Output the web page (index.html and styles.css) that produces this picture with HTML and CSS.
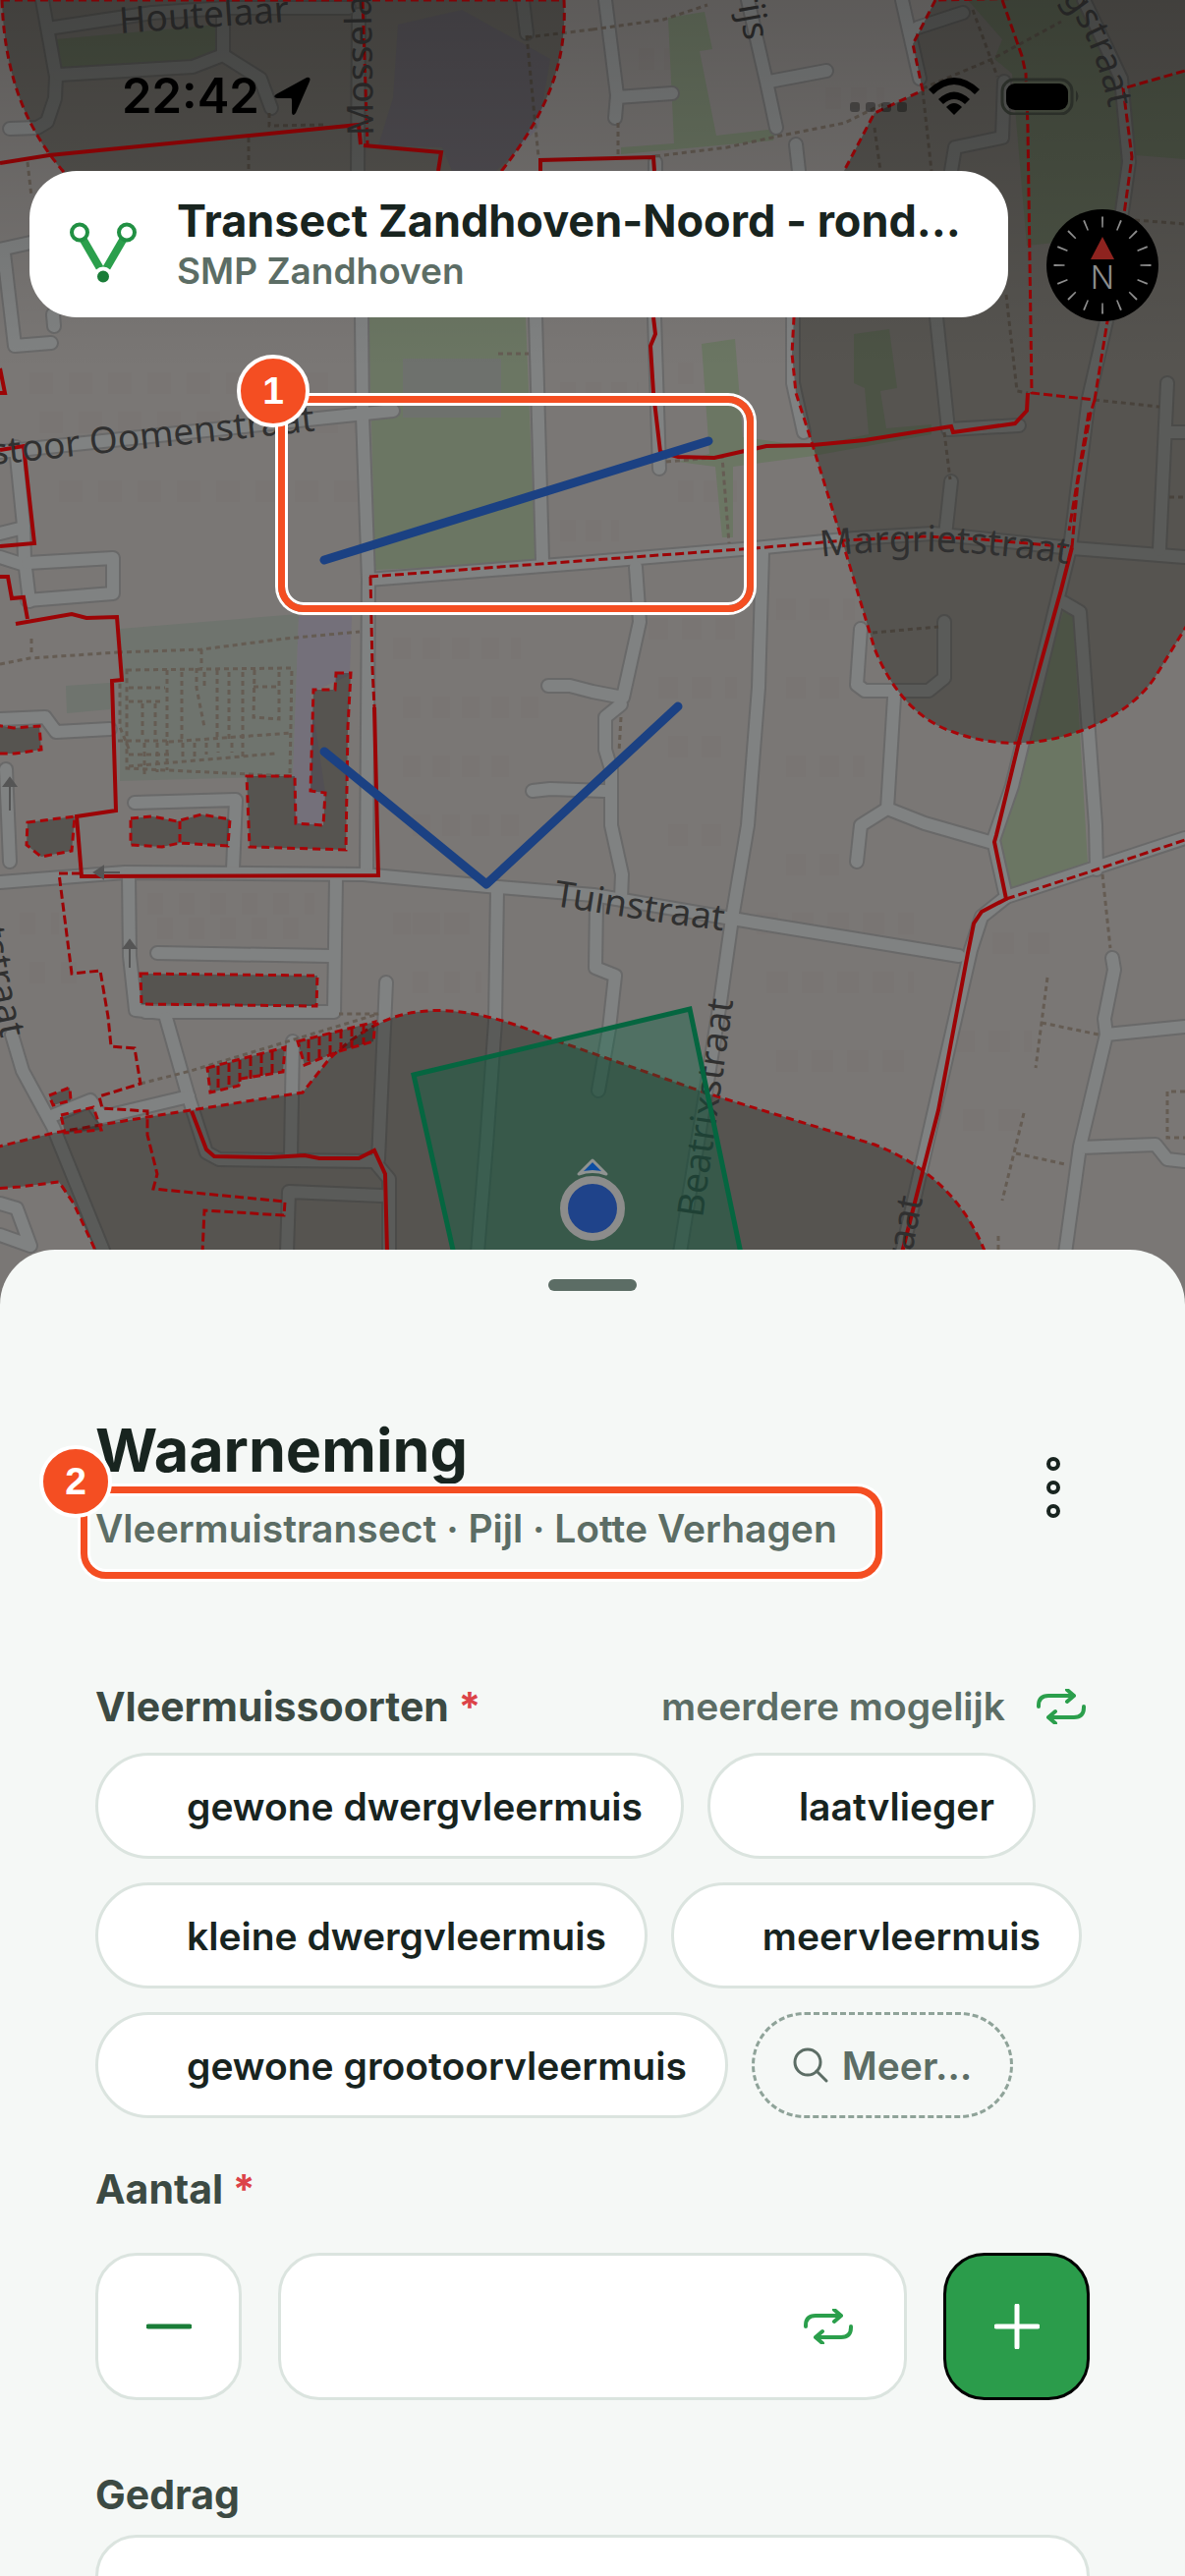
FILE: index.html
```html
<!DOCTYPE html>
<html lang="nl">
<head>
  <meta charset="UTF-8">
  <title>Waarneming | SMP Zandhoven</title>
  <meta name="viewport" content="width=device-width, initial-scale=1.0">
  <link rel="stylesheet" href="styles.css">
</head>
<body>
  <div class="app">
    <section class="map">
      <svg class="map-canvas" viewBox="0 0 1206 1340" aria-hidden="true">
        <defs>
          <linearGradient id="shade" x1="0" y1="0" x2="0" y2="1">
            <stop offset="0" stop-color="#000" stop-opacity="0.24"/>
            <stop offset="0.12" stop-color="#000" stop-opacity="0.14"/>
            <stop offset="0.28" stop-color="#000" stop-opacity="0"/>
          </linearGradient>
          <path id="margriet" d="M836 567 Q950 552 1100 576"/>
          <path id="tuin" d="M563 922 L680 940 L780 953"/>
          <path id="ring" d="M1080 -2 Q1124 50 1136 160"/>
          <g id="streets">
            <path d="M43 0L57 78L56 100L48 124L38 130L10 131"/>
            <path d="M55 28L155 13L230 8L355 8M60 76L196 68L227 56V16M230 58L265 80L276 110"/>
            <path d="M365 15L364 174L368 323L369 423L375 590L373 890"/>
            <path d="M532 0L536 34M0 254L40 245M4 258L15 352L52 349M54 320L55 332"/>
            <path d="M545 323L552 570M0 460L400 418M16 455L24 535L25 570L30 612M0 543L24 537M0 567L25 575"/>
            <path d="M28 573L115 568V604L28 611"/>
            <path d="M0 732L46 730L57 745L112 742M137 817L240 814L237 885"/>
            <path d="M0 898L127 888L370 890L496 902L604 911L745 935L976 973"/>
            <path d="M6 783L10 877M131 890L132 973L138 1028L165 1031M148 1030H340L342 895M160 970L335 973"/>
            <path d="M169 1036L192 1117L210 1173L223 1180L381 1182L396 1200V1275"/>
            <path d="M298 1060L296 1175M393 1000L385 1180M506 905L504 1040L495 1165L486 1275M292 1275L294 1213L388 1217"/>
            <path d="M12 1053L23 1090L54 1147L112 1290M50 1137L92 1120L104 1137L192 1116M0 1257L31 1268L17 1230L0 1225"/>
            <path d="M616 0L628 97L626 120M628 99L684 95M761 0L780 83L790 130M783 83L841 72"/>
            <path d="M918 0L936 80M934 28L980 13M810 147L813 174M667 165L666 323L671 477M807 323V390L818 440"/>
            <path d="M1103 0L1141 80L1149 165L1142 215L1126 327L1108 405L1089 558L1030 800L1011 855L1024 913L999 933L988 967L918 1275"/>
            <path d="M1024 913L1206 853M1022 83L1020 140L972 150L968 174M953 323L965 437L1037 433M968 490L962 545"/>
            <path d="M375 590L603 572L768 558L870 548L949 543L1091 558L1206 567"/>
            <path d="M647 577L651 633L634 710L603 704L580 698H558M632 717L616 730V763L622 783V840L633 890L632 915M542 805L560 803L615 805"/>
            <path d="M776 563L772 700L761 840L745 935L733 1020L692 1275"/>
            <path d="M876 640L872 697L880 703H945L961 690V633M910 710L903 823L876 840L872 877M903 823L941 838L1007 857"/>
            <path d="M1082 613L1099 623L1115 840L1116 885M1188 390L1180 560M1188 440H1206"/>
            <path d="M1132 975L1134 987L1124 1037L1126 1053L1099 1167L1082 1290M1126 1053L1206 1045M1100 1168L1176 1165L1188 1180L1206 1182"/>
            <path d="M607 920L606 985L626 993L620 1047L609 1110"/>
          </g>
        </defs>

        <rect width="1206" height="1340" fill="#7a7775"/>

        <!-- faint parcels -->
        <g class="parcels">
          <path d="M30 390h320M40 430h330M60 500h320" stroke-dasharray="24 16"/>
          <path d="M400 660h130M410 720h140M410 780h120M420 840h110M400 940h90" stroke-dasharray="18 12"/>
          <path d="M660 640h90M670 700h80M680 760h60M680 850h60M790 620h80M800 700h60M800 780h80M800 880h60" stroke-dasharray="20 14"/>
          <path d="M770 940h160M780 1000h150M790 1080h130M970 1060h80M980 1140h70M1010 960h60" stroke-dasharray="22 14"/>
          <path d="M150 920h170M160 945h150M420 940h60M420 1000h70M20 940h40M30 990h60" stroke-dasharray="16 16"/>
          <path d="M570 400h80M690 380h60M690 500h60M570 540h60M840 100h60M650 60h40" stroke-dasharray="16 10"/>
        </g>

        <g class="parks">
          <path d="M57 40L222 25V55L195 64L63 70Z"/>
          <path d="M375 323H535L545 573L382 580Z"/>
          <path d="M680 18L717 12L725 50L712 52L729 138L790 131L787 143L632 157V150L686 146Z"/>
          <path d="M714 350L748 345L756 445L827 455L828 464L746 475V547H735L728 475L690 470L722 462Z"/>
          <path d="M985 0H1100L1138 80L1145 160L1140 240L1045 250L1030 75L1012 60L1020 40Z"/>
          <path d="M1148 90L1206 72V162L1155 158Z"/>
          <path d="M869 340L905 335L913 395L896 398L902 436L948 432V442L828 464L827 454L884 442L880 395L869 390Z"/>
          <path d="M1083 620L1092 628L1107 879L1030 908L1018 855L1040 760Z"/>
        </g>
        <path d="M410 365H510V425H410Z" fill="#6e716d"/>
        <path d="M122 640L304 625L298 790L122 795ZM67 698L112 695V722L68 726Z" fill="#6f746e"/>
        <path d="M304 627H358L356 687L316 705L331 807L328 840H300L298 790ZM405 25L470 10L560 60L548 130L505 174H460L450 150L385 148L400 100Z" fill="#74707a"/>

        <use href="#streets" class="street-edge"/>
        <use href="#streets" class="street-fill"/>

        <!-- foot paths -->
        <g class="footpaths">
          <path d="M120 664L205 661L290 650L366 643M205 661V680M0 676L30 670L120 664M32 650V668"/>
          <path d="M129 682L297 680L295 790L129 782Z"/>
          <path d="M131 700H168M131 714H165M170 682V784M185 684V755M200 680V700L208 740M208 684V702M221 682V750M233 684V755M247 684V770M259 682L258 730L284 732V682M258 699H284M131 762L122 740V695"/>
          <path d="M172 755L297 746M120 754H170M145 716V750M158 716V750M147 756V790M160 756V786M186 756V770M198 756V770M210 756V768M222 756V766M236 756V766M131 768H175M131 780L280 767"/>
          <path d="M603 30L675 20L720 5M629 125V158M667 159L740 150L790 139L860 125L900 105M939 90L1010 60L1080 22M890 130L896 174M939 92L948 174M990 10L1015 78"/>
          <path d="M536 36L548 160M536 38L603 30M274 115V128L330 127M253 140V174M28 165L32 200M507 360H538"/>
          <path d="M1024 300L1035 398L1046 400M1114 407L1180 414M961 440L967 488M888 644L955 638M678 470L735 465L742 553M1155 224L1206 228M1190 506H1206"/>
          <path d="M1122 890L1130 965M1066 995L1054 1087M1060 1041L1118 1053M1042 1133L1020 1222M1034 1174L1084 1185M1016 1258V1275M1206 1111H1188V1158H1206M632 730L630 765"/>
          <path d="M143 1103L194 1090L385 1032H345"/>
        </g>

        <!-- protected zones -->
        <g class="zones">
          <path d="M2 0C5 90 35 140 64 174C160 300 410 300 512 172C560 110 577 60 574 0Z"/>
          <path d="M952 0L929 45L939 92L890 115L859 174L830 240L808 323L806 360L810 400L827 453L860 560L890 660C910 710 940 735 970 745Q1037 770 1110 740Q1155 720 1175 690L1212 630V-5Z"/>
          <path d="M-5 1168L55 1153L150 1137L308 1112L335 1078Q380 1035 425 1030Q480 1022 560 1057L720 1113L890 1165Q980 1200 1008 1290H105L75 1225L60 1203L20 1208L-5 1210Z"/>
          <path d="M342 685H357L354 740L352 865L254 862L251 790H300L301 838L329 840L331 807L316 805L319 702H341Z"/>
          <path d="M133 833L155 831L180 836L205 829L234 834L232 861L183 858L165 862L133 860ZM183 836V858"/>
          <path d="M28 837L76 831L73 866L42 872L27 860ZM-5 738L14 741L40 739L42 763L15 767H-5Z"/>
          <path d="M143 991L323 993L322 1024L144 1022ZM50 1115L71 1107L72 1120L54 1125ZM62 1135L95 1127L103 1150L66 1153Z"/>
          <path d="M211 1087L290 1066L288 1091L245 1098L243 1105L214 1112ZM303 1060L382 1040L380 1060L345 1070L310 1084Z"/>
        </g>
        <path class="dashed" d="M222 1085V1110M233 1082V1108M244 1079V1102M255 1076V1098M266 1073V1096M277 1070V1094M314 1058V1082M325 1055V1080M336 1051V1076M347 1048V1070M358 1046V1066M370 1043V1063"/>

        <g class="solid">
          <path d="M0 166L50 158L365 127L367 147M370 148L449 155L446 174M550 174V163L665 160L666 174"/>
          <path d="M665 323L667 340L662 352L665 400L672 460L690 465L727 466L780 454L827 453L880 448L968 434L970 440L1033 431L1045 418L1046 400"/>
          <path d="M381 720L385 891L83 892L78 831L118 825L114 693L124 692L119 628L88 629L73 625L16 635M0 458L24 454L35 553L0 556M0 587H8L12 609L24 608L28 630M0 375L5 400H0"/>
          <path d="M1091 557L1080 600L1037 755L1014 850L1012 857L1024 915L999 928L991 940L985 970L955 1130L918 1275"/>
          <path d="M195 1131L210 1170L218 1177L275 1178L310 1176L325 1179H365L381 1171L392 1195L394 1275"/>
        </g>
        <g class="dashed">
          <path d="M369 0L374 147M1020 0L1040 57L1044 75L1046 130L1050 400L1114 407L1127 327L1143 225L1152 160L1143 90L1206 72"/>
          <path d="M1114 407L1110 420L1097 490L1091 557M1108 420L1088 540M1024 915L1110 887L1206 855"/>
          <path d="M376 587L603 570L768 558L860 550L940 546L1000 549L1091 557M377 587L379 680L381 720"/>
          <path d="M82 889H60L73 991L102 988L110 1035L113 1065L137 1067L143 1103L101 1116L104 1128L150 1131V1155L160 1195L156 1210L290 1223L289 1237L208 1232L206 1275"/>
        </g>

        <g class="oneway">
          <path d="M122 888H98M105 882L96 888L105 894Z"/>
          <path d="M132 985V962M126 965L132 957L138 965Z"/>
          <path d="M10 825V798M4 800L10 792L16 800Z"/>
        </g>

        <g class="street-names">
          <text transform="translate(122 34) rotate(-4)">Houtelaar</text>
          <text transform="translate(380 138) rotate(-91)">Mosselaar</text>
          <text transform="translate(-8 473) rotate(-6)">stoor Oomenstraat</text>
          <text transform="translate(758 42) rotate(80)" text-anchor="end">Parijs</text>
          <text><textPath href="#ring">gstraat</textPath></text>
          <text><textPath href="#margriet">Margrietstraat</textPath></text>
          <text><textPath href="#tuin">Tuinstraat</textPath></text>
          <text transform="translate(715 1240) rotate(-82)">Beatrixstraat</text>
          <text transform="translate(939 1220) rotate(-79)" text-anchor="end">straat</text>
          <text transform="translate(1 1057) rotate(79)" text-anchor="end">Schutstraat</text>
        </g>

        <rect width="1206" height="1340" fill="url(#shade)"/>

        <path class="area" d="M421 1094L702 1027L757 1290H465Z"/>
        <path class="transect" d="M330 570L721 449M330 765L495 900L690 719"/>
        <path d="M603 1181L589 1195Q603 1190 617 1195Z" fill="#0c4da2" stroke="#8f9391" stroke-width="3" stroke-linejoin="round"/>
        <circle cx="603" cy="1230" r="29" fill="#1f438a" stroke="#8c8c8b" stroke-width="8"/>
      </svg>

      <div class="map-overlay">
        <div class="status-bar">
          <span class="time">22:42</span>
          <svg class="location" viewBox="0 0 38 40"><path d="M3 18Q-1 21 4 22L18 22Q19 22 19 24V37Q20 41 23 37L37 5Q39 0 34 1Z"/></svg>
          <svg class="signal" viewBox="0 0 60 12"><rect width="10" height="10" rx="3"/><rect x="16" width="10" height="10" rx="3"/><rect x="32" width="10" height="10" rx="3"/><rect x="48" width="10" height="10" rx="3"/></svg>
          <svg class="wifi" viewBox="0 0 52 38"><path d="M26 38L18 30Q26 22 34 30ZM10 22Q26 7 42 22L37 27Q26 17 15 27ZM0 12Q26-12 52 12L47 17Q26-3 5 17Z"/></svg>
          <svg class="battery" viewBox="0 0 82 38"><rect x="2" y="2" width="71" height="35" rx="12" fill="none" stroke="#2b2f29" stroke-width="3"/><rect x="6" y="6" width="63" height="27" rx="9"/><path d="M77 13Q82 19 77 25Z" fill="#2b2f29"/></svg>
        </div>

        <div class="top-row">
          <div class="route-card">
            <svg class="route-icon" viewBox="0 0 68 62">
              <path d="M13 16L31 47M55 16L37 47" stroke="#2b9f4c" stroke-width="8"/>
              <circle cx="10" cy="10" r="8" fill="#fff" stroke="#219043" stroke-width="4"/>
              <circle cx="58" cy="10" r="8" fill="#fff" stroke="#219043" stroke-width="4"/>
              <circle cx="34" cy="55" r="8" fill="#1a7d38" stroke="#fff" stroke-width="4"/>
            </svg>
            <div class="route-text">
              <div class="route-title">Transect Zandhoven-Noord - rond…</div>
              <div class="route-project">SMP Zandhoven</div>
            </div>
          </div>
          <button type="button" class="compass" aria-label="Noorden boven">
            <svg viewBox="0 0 114 114">
              <circle cx="57" cy="57" r="57"/>
              <circle cx="57" cy="57" r="44" fill="none" stroke="#8d8d8d" stroke-width="11" pathLength="160" stroke-dasharray="1 9" stroke-dashoffset="0.5"/>
              <path d="M57 28L69 51H45Z" fill="#8e231f"/>
              <text x="57" y="81" text-anchor="middle">N</text>
            </svg>
          </button>
        </div>
      </div>

      <div class="highlight highlight-map"><span class="badge">1</span></div>
    </section>

    <main class="sheet">
      <div class="handle"></div>

      <header class="sheet-header">
        <div>
          <h1>Waarneming</h1>
          <p class="subtitle">Vleermuistransect · Pijl · Lotte Verhagen
            <span class="highlight highlight-text"><span class="badge">2</span></span>
          </p>
        </div>
        <button type="button" class="menu" aria-label="Menu">
          <svg viewBox="0 0 20 64"><circle cx="10" cy="8" r="5"/><circle cx="10" cy="32" r="5"/><circle cx="10" cy="56" r="5"/></svg>
        </button>
      </header>

      <form>
        <div class="field-head">
          <span class="field-label">Vleermuissoorten <span class="required">*</span></span>
          <span class="hint">meerdere mogelijk</span>
          <button type="button" class="repeat" aria-label="Soorten onthouden">
            <svg viewBox="0 0 50 36"><path d="M2 18V17Q2 7 12 7H38M31 1L38 7L31 13M48 18V19Q48 29 38 29H12M19 23L12 29L19 35"/></svg>
          </button>
        </div>
        <div class="chips">
          <label class="chip"><input type="checkbox" name="soort">gewone dwergvleermuis</label>
          <label class="chip"><input type="checkbox" name="soort">laatvlieger</label>
          <label class="chip"><input type="checkbox" name="soort">kleine dwergvleermuis</label>
          <label class="chip"><input type="checkbox" name="soort">meervleermuis</label>
          <label class="chip"><input type="checkbox" name="soort">gewone grootoorvleermuis</label>
          <button type="button" class="chip chip-more">
            <svg viewBox="0 0 36 36"><circle cx="15" cy="15" r="13"/><path d="M24 24L34 34"/></svg>
            Meer…
          </button>
        </div>

        <div class="field-head count-head">
          <label class="field-label" for="aantal">Aantal <span class="required">*</span></label>
        </div>
        <div class="stepper">
          <button type="button" class="step" aria-label="Minder">
            <svg viewBox="0 0 46 46"><path d="M2 23H44"/></svg>
          </button>
          <div class="count">
            <input type="text" id="aantal" inputmode="numeric">
            <button type="button" class="repeat" aria-label="Aantal onthouden">
              <svg viewBox="0 0 50 36"><path d="M2 18V17Q2 7 12 7H38M31 1L38 7L31 13M48 18V19Q48 29 38 29H12M19 23L12 29L19 35"/></svg>
            </button>
          </div>
          <button type="button" class="step step-plus" aria-label="Meer">
            <svg viewBox="0 0 46 46"><path d="M2 23H44M23 2V44"/></svg>
          </button>
        </div>

        <div class="field-head behaviour-head">
          <label class="field-label" for="gedrag">Gedrag</label>
        </div>
        <select id="gedrag" class="behaviour"><option></option></select>
      </form>
    </main>
  </div>
</body>
</html>
```
FILE: styles.css
```css
* {
  box-sizing: border-box;
}

body {
  margin: 0;
  background: #f5f8f6;
  color: #18241f;
  font-family: Inter, "Liberation Sans", sans-serif;
}

button,
input,
select {
  font: inherit;
  color: inherit;
  padding: 0;
  border: none;
  background: none;
}

svg {
  display: block;
}

.app {
  height: 100vh;
  overflow: hidden;
}

/* map */
.map {
  position: relative;
}

.map-canvas {
  width: 100%;
  height: auto;
}

.parcels {
  fill: none;
  stroke: #726c66;
  stroke-width: 22;
  opacity: 0.1;
}

.parks {
  fill: #6b7663;
}

.street-edge,
.street-fill {
  fill: none;
  stroke-linecap: round;
  stroke-linejoin: round;
}

.street-edge {
  stroke: #696969;
  stroke-width: 16px;
}

.street-fill {
  stroke: #808282;
  stroke-width: 12px;
}

.footpaths {
  fill: none;
  stroke: #655c53;
  stroke-width: 3px;
  stroke-dasharray: 5 4;
}

.zones {
  fill: rgba(22, 22, 18, 0.36);
  stroke: #a80508;
  stroke-width: 3px;
  stroke-dasharray: 8 5;
}

.solid,
.dashed {
  fill: none;
  stroke: #9c0406;
  stroke-width: 4px;
}

.dashed {
  stroke-width: 3px;
  stroke-dasharray: 9 4;
}

.oneway {
  fill: #555;
  stroke: #555;
  stroke-width: 2px;
}

.street-names {
  font-family: "Noto Sans", sans-serif;
  font-size: 37px;
  fill: #303030;
}

.area {
  fill: rgba(0, 100, 64, 0.34);
  stroke: #056640;
  stroke-width: 5px;
}

.transect {
  fill: none;
  stroke: #1b4183;
  stroke-width: 9px;
  stroke-linecap: round;
  stroke-linejoin: round;
}

.map-overlay {
  position: absolute;
  top: 0;
  left: 0;
  right: 0;
}

.status-bar {
  display: flex;
  align-items: center;
  padding: 68px 106px 46px 124px;
  color: #000;
}

.time {
  font-size: 49px;
  font-weight: 600;
  line-height: 60px;
}

.location {
  width: 38px;
  margin-left: 14px;
}

.signal {
  width: 60px;
  margin: 24px 20px 0 auto;
  fill: rgba(0, 0, 0, 0.34);
}

.wifi {
  width: 52px;
  margin-right: 21px;
}

.battery {
  width: 82px;
}

.top-row {
  display: flex;
  align-items: flex-start;
  gap: 39px;
  padding: 0 27px 0 30px;
}

.route-card {
  flex: 1;
  min-width: 0;
  display: flex;
  gap: 41px;
  padding: 24px 36px 24px 41px;
  background: #fff;
  border-radius: 48px;
}

.route-icon {
  flex: none;
  width: 68px;
  margin-top: 18px;
}

.route-text {
  min-width: 0;
  white-space: nowrap;
}

.route-title {
  font-size: 45px;
  font-weight: 700;
  line-height: 54px;
}

.route-project {
  font-size: 37px;
  font-weight: 600;
  line-height: 47px;
  color: #5c6d65;
}

.compass {
  width: 114px;
  margin-top: 39px;
}

.compass text {
  font-size: 32px;
  font-weight: 300;
  fill: #8d8d8d;
}

/* numbered highlights */
.highlight {
  position: absolute;
  border: 7px solid #f44e22;
  border-radius: 26px;
  box-shadow: 0 0 0 3px #fff, inset 0 0 0 3px #fff;
}

.highlight-map {
  top: 403px;
  left: 283px;
  width: 484px;
  height: 220px;
}

.highlight-text {
  top: -19px;
  bottom: -27px;
  left: -15px;
  right: -46px;
}

.badge {
  position: absolute;
  top: -49px;
  left: -49px;
  width: 74px;
  height: 74px;
  border: 4px solid #fff;
  border-radius: 50%;
  background: #f44e22;
  color: #fff;
  font: bold 39px/66px "Liberation Sans", sans-serif;
  text-align: center;
}

/* sheet */
.sheet {
  position: relative;
  margin-top: -68px;
  padding: 30px 97px;
  background: #f5f8f6;
  border-radius: 56px 56px 0 0;
}

.handle {
  width: 90px;
  height: 12px;
  margin: 0 auto 126px;
  border-radius: 6px;
  background: #5c6d65;
}

.sheet-header {
  display: flex;
  justify-content: space-between;
  align-items: flex-end;
  margin-bottom: 133px;
}

h1 {
  margin: 0 0 20px;
  font-size: 61px;
  font-weight: 700;
  line-height: 72px;
}

.subtitle {
  position: relative;
  margin: 0;
  font-size: 39px;
  font-weight: 600;
  line-height: 48px;
  color: #5c6d65;
}

.menu {
  width: 74px;
  height: 132px;
}

.menu svg {
  width: 20px;
  margin: auto;
  fill: none;
  stroke: #18241f;
  stroke-width: 4px;
}

.field-head {
  display: flex;
  align-items: center;
  margin-bottom: 23px;
  line-height: 48px;
}

.field-label {
  font-size: 41px;
  font-weight: 700;
  color: #3c4a43;
}

.required {
  color: #dc4348;
}

.hint {
  margin-left: auto;
  font-size: 39px;
  font-weight: 600;
  color: #5c6d65;
}

.repeat {
  width: 50px;
  margin: 0 4px 0 32px;
}

.repeat svg {
  fill: none;
  stroke: #2b9f4c;
  stroke-width: 4px;
  stroke-linecap: round;
  stroke-linejoin: round;
}

.chips {
  display: flex;
  flex-wrap: wrap;
  gap: 24px;
}

.chip {
  display: flex;
  align-items: center;
  height: 108px;
  padding: 0 39px;
  border: 3px solid #dbe4df;
  border-radius: 54px;
  background: #fff;
  font-size: 39px;
  font-weight: 600;
}

.chip input {
  appearance: none;
  width: 36px;
  height: 36px;
  margin: 0 15px 0 0;
}

.chip-more {
  gap: 14px;
  border: 3px dashed #8fa399;
  background: none;
  color: #5c6d65;
}

.chip-more svg {
  width: 36px;
  fill: none;
  stroke: #5c6d65;
  stroke-width: 3px;
  stroke-linecap: round;
}

.count-head {
  margin: 48px 0 41px;
}

.stepper {
  display: flex;
  gap: 37px;
}

.step,
.count,
.behaviour {
  height: 150px;
  border: 3px solid #dbe4df;
  border-radius: 42px;
  background: #fff;
}

.step {
  flex: none;
  width: 149px;
}

.step svg {
  width: 46px;
  margin: auto;
  stroke: #1a7d38;
  stroke-width: 5px;
  stroke-linecap: round;
}

.step-plus {
  border-color: #000;
  background: #2b9c4b;
}

.step-plus svg {
  stroke: #fff;
}

.count {
  flex: 1;
  min-width: 0;
  display: flex;
  align-items: center;
  padding: 0 48px 0 40px;
}

.count input {
  flex: 1;
  min-width: 0;
  height: 100%;
  font-size: 39px;
  outline: none;
}

.behaviour-head {
  margin: 72px 0 17px;
}

.behaviour {
  display: block;
  width: 100%;
  appearance: none;
}
```
